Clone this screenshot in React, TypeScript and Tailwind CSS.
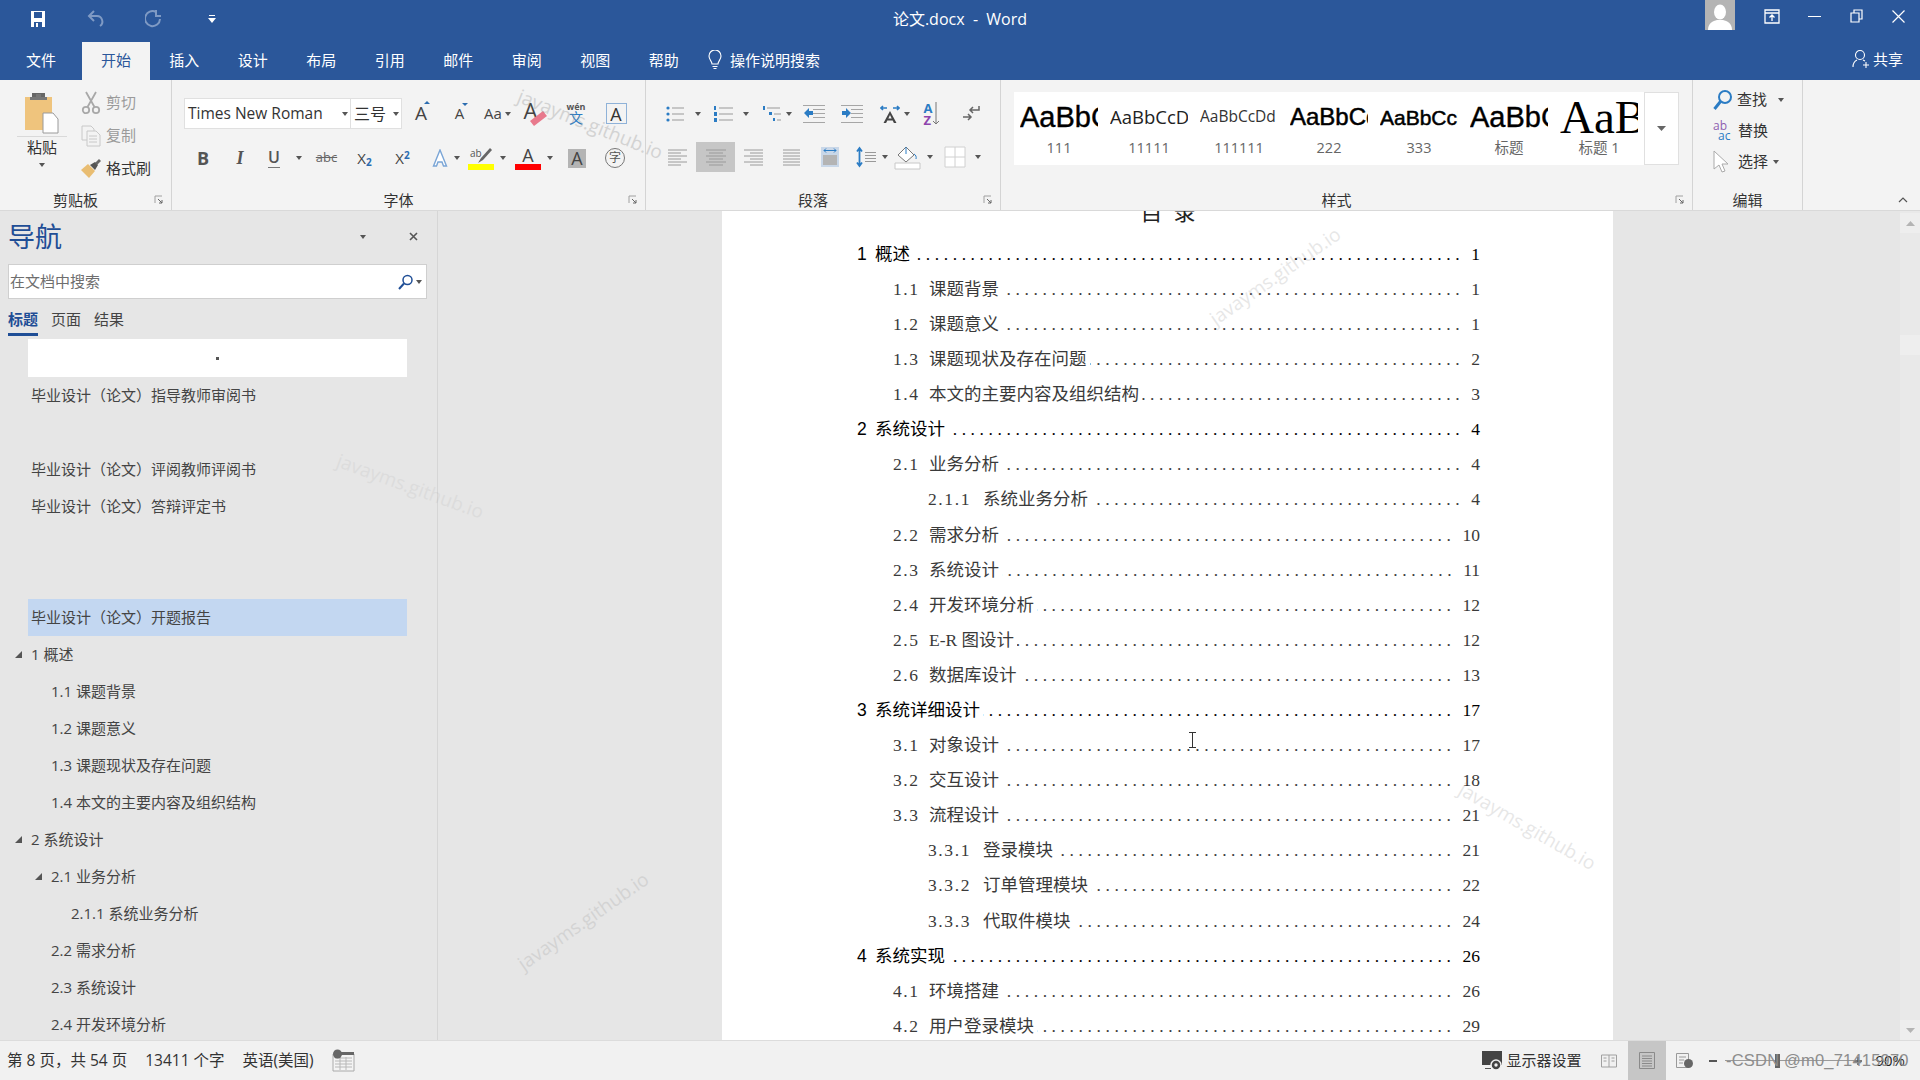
import React from 'react';

const tabs = ['插入', '设计', '布局', '引用', '邮件', '审阅', '视图', '帮助'];

const navRows: { text: string; level: number; open?: boolean; active?: boolean }[] = [
    { text: '毕业设计（论文）指导教师审阅书', level: 0 },
    { text: '', level: 0 },
    { text: '毕业设计（论文）评阅教师评阅书', level: 0 },
    { text: '毕业设计（论文）答辩评定书', level: 0 },
    { text: '', level: 0 },
    { text: '', level: 0 },
    { text: '毕业设计（论文）开题报告', level: 0, active: true },
    { text: '1 概述', level: 0, open: true },
    { text: '1.1 课题背景', level: 1 },
    { text: '1.2 课题意义', level: 1 },
    { text: '1.3 课题现状及存在问题', level: 1 },
    { text: '1.4 本文的主要内容及组织结构', level: 1 },
    { text: '2 系统设计', level: 0, open: true },
    { text: '2.1 业务分析', level: 1, open: true },
    { text: '2.1.1 系统业务分析', level: 2 },
    { text: '2.2 需求分析', level: 1 },
    { text: '2.3 系统设计', level: 1 },
    { text: '2.4 开发环境分析', level: 1 },
];

const toc: [number, string, string, string][] = [
    [1, '1', '概述', '1'],
    [2, '1.1', '课题背景', '1'],
    [2, '1.2', '课题意义', '1'],
    [2, '1.3', '课题现状及存在问题', '2'],
    [2, '1.4', '本文的主要内容及组织结构', '3'],
    [1, '2', '系统设计', '4'],
    [2, '2.1', '业务分析', '4'],
    [3, '2.1.1', '系统业务分析', '4'],
    [2, '2.2', '需求分析', '10'],
    [2, '2.3', '系统设计', '11'],
    [2, '2.4', '开发环境分析', '12'],
    [2, '2.5', 'E-R 图设计', '12'],
    [2, '2.6', '数据库设计', '13'],
    [1, '3', '系统详细设计', '17'],
    [2, '3.1', '对象设计', '17'],
    [2, '3.2', '交互设计', '18'],
    [2, '3.3', '流程设计', '21'],
    [3, '3.3.1', '登录模块', '21'],
    [3, '3.3.2', '订单管理模块', '22'],
    [3, '3.3.3', '代取件模块', '24'],
    [1, '4', '系统实现', '26'],
    [2, '4.1', '环境搭建', '26'],
    [2, '4.2', '用户登录模块', '29'],
];

const styles = [
    { preview: 'AaBbCcDd', name: '111', cls: "text-[29px] text-black [-webkit-text-stroke:0.4px_black] font-['Liberation_Sans',sans-serif]" },
    { preview: 'AaBbCcDd', name: '11111', cls: "text-[18.5px] text-[#222] font-['Open_Sans',sans-serif]" },
    { preview: 'AaBbCcDd', name: '111111', cls: "text-[15.5px] text-[#333] font-['Open_Sans',sans-serif]" },
    { preview: 'AaBbCcDd', name: '222', cls: "text-[24px] text-black [-webkit-text-stroke:0.5px_black] font-['Liberation_Sans',sans-serif]" },
    { preview: 'AaBbCcDd', name: '333', cls: "text-[21px] text-black [-webkit-text-stroke:0.5px_black] font-['Liberation_Sans',sans-serif]" },
    { preview: 'AaBbCcDd', name: '标题', cls: "text-[29px] text-black [-webkit-text-stroke:0.4px_black] font-['Liberation_Sans',sans-serif]" },
    { preview: 'AaBbCcDd', name: '标题 1', cls: "text-[47px] text-black font-['Liberation_Serif',serif]" },
];

function Caret({ color = '#555' }: { color?: string }) {
    return (
        <svg width="6" height="4" viewBox="0 0 6 4" className="shrink-0">
            <polygon points="0,0 6,0 3,4" fill={color} />
        </svg>
    );
}

function Cell({ w, children }: { w: string; children?: React.ReactNode }) {
    return <div className={`flex items-center justify-center shrink-0 ${w}`}>{children}</div>;
}

function Launcher() {
    return (
        <svg width="10" height="10" viewBox="0 0 10 10" className="absolute right-[7px] bottom-[5px]">
            <path d="M1 8V1h7" fill="none" stroke="#a0a0a0" />
            <path d="M4 4l4 4M8 5v3H5" fill="none" stroke="#666" />
        </svg>
    );
}

function Lines({ rows, w = 20, h = 20 }: { rows: [number, number, number][]; w?: number; h?: number }) {
    return (
        <svg width={w} height={h} viewBox={`0 0 ${w} ${h}`}>
            {rows.map(([a, b, y], i) => (
                <line key={i} x1={a} x2={b} y1={y} y2={y} stroke="#9a9a9a" strokeWidth="1" />
            ))}
        </svg>
    );
}

function Watermark({ cls }: { cls: string }) {
    return (
        <div className={`absolute pointer-events-none whitespace-nowrap text-[19px] font-['Open_Sans',sans-serif] text-[#8a8a8a] ${cls}`}>
            javayms.github.io
        </div>
    );
}

function TitleBar() {
    return (
        <div className="grid grid-cols-[1fr_auto_1fr] h-[42px] text-white">
            <div className="flex items-center h-[38px] pl-[9px]">
                <Cell w="w-[58px]">
                    <svg width="16" height="18" viewBox="0 0 16 18">
                        <path d="M1 1h14v16H1z" fill="#fff" />
                        <path d="M4 2h8v6H4zM4 12h8v5H4z" fill="#2b579a" />
                        <path d="M6 13h2v4H6z" fill="#fff" />
                    </svg>
                </Cell>
                <Cell w="w-[58px]">
                    <svg width="18" height="20" viewBox="0 0 18 20" fill="none" stroke="#7f9ac4" strokeWidth="2">
                        <path d="M7 2L2 7l5 5M2 7h8a5.5 5.5 0 0 1 3 10" />
                    </svg>
                </Cell>
                <Cell w="w-[58px]">
                    <svg width="18" height="20" viewBox="0 0 18 20" fill="none" stroke="#7f9ac4" strokeWidth="2">
                        <path d="M11 3a7.5 7.5 0 1 0 4 7M11 1v6h5" />
                    </svg>
                </Cell>
                <Cell w="w-[58px]">
                    <svg width="8" height="8" viewBox="0 0 8 8">
                        <path d="M1 0h6v1H1zM0 3h8L4 8z" fill="#fff" />
                    </svg>
                </Cell>
            </div>
            <div className="h-[38px] flex items-center text-[16px] leading-none">论文.docx&nbsp; - &nbsp;Word</div>
            <div className="flex items-start justify-end h-full pr-px">
                <div className="w-[30px] h-[30px] bg-[#b4b4b4] mr-[16px] overflow-hidden flex justify-center items-end">
                    <svg width="28" height="28" viewBox="0 0 28 28">
                        <ellipse cx="14" cy="10" rx="6" ry="7.5" fill="#fff" />
                        <path d="M2 28c0-7 5-9 9-10h6c4 1 9 3 9 10z" fill="#fff" />
                    </svg>
                </div>
                <Cell w="w-[42px] h-[32px]">
                    <svg width="16" height="15" viewBox="0 0 16 15" fill="none" stroke="#fff" strokeWidth="1.3">
                        <path d="M1 1h14v13H1zM1 4h14M8 12V6M5.5 8.5L8 6l2.5 2.5" />
                    </svg>
                </Cell>
                <Cell w="w-[42px] h-[32px]">
                    <div className="w-[13px] h-px bg-white" />
                </Cell>
                <Cell w="w-[42px] h-[32px]">
                    <svg width="13" height="14" viewBox="0 0 13 14" fill="none" stroke="#fff" strokeWidth="1.2">
                        <path d="M1 4h8v9H1zM4 4V1h8v9H9" />
                    </svg>
                </Cell>
                <Cell w="w-[42px] h-[32px]">
                    <svg width="13" height="13" viewBox="0 0 13 13" stroke="#fff" strokeWidth="1.2">
                        <path d="M0.5 0.5l12 12M12.5 0.5l-12 12" />
                    </svg>
                </Cell>
            </div>
        </div>
    );
}

function TabBar() {
    return (
        <div className="flex h-[38px] text-white text-[15px] leading-none items-stretch">
            <div className="w-[82px] flex items-center justify-center pb-[2px]">文件</div>
            <div className="w-[68px] flex items-center justify-center pb-[2px] bg-[#f3f3f3] text-[#2b579a]">开始</div>
            {tabs.map((t) => (
                <div key={t} className="w-[68.5px] flex items-center justify-center pb-[2px]">
                    {t}
                </div>
            ))}
            <div className="flex items-center ml-[10px] gap-[8px] pb-[2px]">
                <svg width="14" height="20" viewBox="0 0 14 20" fill="none" stroke="#fff" strokeWidth="1.1">
                    <path d="M4 14c0-3-3-4-3-8a6 6 0 0 1 12 0c0 4-3 5-3 8zM4.5 16.5h5M5.5 18.5h3" />
                </svg>
                操作说明搜索
            </div>
            <div className="ml-auto flex items-center gap-[3px] pr-[17px] pb-[4px]">
                <svg width="18" height="20" viewBox="0 0 18 20" fill="none" stroke="#fff" strokeWidth="1.1">
                    <circle cx="8" cy="6" r="4.5" />
                    <path d="M1 18c0-4 2-6 4-7M11 11l2 1M14 13v6M11 16h6" />
                </svg>
                共享
            </div>
        </div>
    );
}

function GroupLabel({ text, launcher = true }: { text: string; launcher?: boolean }) {
    return (
        <>
            <div className={`absolute bottom-0 left-0 right-0 h-[20px] flex items-center justify-center text-[15px] leading-none text-[#333] ${launcher ? 'pr-[20px]' : ''}`}>
                {text}
            </div>
            {launcher && <Launcher />}
        </>
    );
}

function ClipboardGroup() {
    return (
        <div className="relative w-[172px] shrink-0 border-r border-[#d4d4d4] flex">
            <div className="w-[78px] ml-[3px] flex flex-col items-center shrink-0">
                <svg width="36" height="42" viewBox="0 0 36 42" className="mt-[12px]">
                    <path d="M1 5h27v33H1z" fill="#efc47d" />
                    <path d="M8 5h13V1h-13z" fill="#666" />
                    <path d="M12 2h5v3h-5zM6 5h17v3H6z" fill="#777" />
                    <path d="M19 21h10l5 6v14H19z" fill="#fff" stroke="#9a9a9a" />
                </svg>
                <div className="w-[50px] h-px bg-[#d9d9d9] mt-[2px]" />
                <div className="text-[15px] leading-none text-[#333] mt-[3px]">粘贴</div>
                <div className="mt-[8px]">
                    <Caret />
                </div>
            </div>
            <div className="flex flex-col pt-[6px] text-[15px] leading-none">
                <div className="flex items-center gap-[5px] h-[33px] text-[#9b9b9b]">
                    <svg width="20" height="24" viewBox="0 0 20 24" fill="none" stroke="#a8a8a8" strokeWidth="1.8">
                        <circle cx="5" cy="19" r="3.2" />
                        <circle cx="15" cy="19" r="3.2" />
                        <path d="M6.5 16L15 1M13.5 16L5 1" />
                    </svg>
                    剪切
                </div>
                <div className="flex items-center gap-[5px] h-[33px] text-[#9b9b9b]">
                    <svg width="20" height="22" viewBox="0 0 20 22" fill="#f3f3f3" stroke="#c8c8c8">
                        <path d="M1 1h9l3 3v11H1z" />
                        <path d="M6 6h9l4 4v11H6zM8 11h8M8 14h8M8 17h8" />
                    </svg>
                    复制
                </div>
                <div className="flex items-center gap-[5px] h-[33px] text-[#333]">
                    <svg width="20" height="20" viewBox="0 0 20 20">
                        <path d="M0 11l7-6 7 7-6 7z" fill="#e9bd72" />
                        <path d="M9 6l5-3 3 3-3 5z" fill="#555" />
                        <path d="M14 4l4-4 2 2-4 4z" fill="#666" />
                    </svg>
                    格式刷
                </div>
            </div>
            <GroupLabel text="剪贴板" />
        </div>
    );
}

function FontGroup() {
    return (
        <div className="relative w-[474px] shrink-0 border-r border-[#d4d4d4] pl-[12px] pt-[18px] text-[#444]">
            <div className="flex items-center h-[31px]">
                <div className="w-[167px] h-full bg-white border border-[#e0e0e0] flex items-center justify-between pl-[3px] pr-[2px] text-[15.5px] text-[#333] font-['Open_Sans',sans-serif]">
                    Times New Roman
                    <Caret />
                </div>
                <div className="w-[51px] h-full bg-white border border-l-0 border-[#e0e0e0] flex items-center justify-between pl-[3px] pr-[2px] text-[16px] text-[#333]">
                    三号
                    <Caret />
                </div>
                <Cell w="w-[38px]">
                    <span className="relative text-[19px] leading-none font-['Open_Sans',sans-serif]">
                        A
                        <span className="absolute -top-[3px] -right-[3px] w-0 h-0 border-x-[3px] border-x-transparent border-b-[3px] border-b-[#2b6cb0]" />
                    </span>
                </Cell>
                <Cell w="w-[39px]">
                    <span className="relative text-[15px] leading-none font-['Open_Sans',sans-serif]">
                        A
                        <span className="absolute -top-[3px] -right-[4px] w-0 h-0 border-x-[3px] border-x-transparent border-t-[3px] border-t-[#2b6cb0]" />
                    </span>
                </Cell>
                <Cell w="w-[37px]">
                    <span className="text-[15px] leading-none font-['Open_Sans',sans-serif] mr-[3px]">Aa</span>
                    <Caret />
                </Cell>
                <Cell w="w-[39px]">
                    <span className="relative text-[22px] leading-none font-['Open_Sans',sans-serif] pr-[10px] pb-[8px]">
                        A
                        <svg width="22" height="20" viewBox="0 0 22 20" className="absolute left-[3px] top-[9px]">
                            <path d="M3 13L16 3l4 5-13 10z" fill="#e8798c" />
                        </svg>
                    </span>
                </Cell>
                <Cell w="w-[42px]">
                    <div className="flex flex-col items-center leading-none font-['Open_Sans','Noto_Sans_CJK_SC',sans-serif]">
                        <span className="text-[9px] font-bold text-[#555]">wén</span>
                        <span className="text-[14px] text-[#2b7cc4]">文</span>
                    </div>
                </Cell>
                <Cell w="w-[38px]">
                    <div className="w-[21px] h-[21px] border border-[#8fb2d8] flex items-center justify-center text-[18px] leading-none font-['Open_Sans',sans-serif] text-[#333]">
                        A
                    </div>
                </Cell>
            </div>
            <div className="flex items-center h-[30px] mt-[14px]">
                <Cell w="w-[38px]">
                    <span className="text-[18px] font-bold font-['Open_Sans',sans-serif] text-[#555]">B</span>
                </Cell>
                <Cell w="w-[36px]">
                    <span className="text-[18px] italic font-bold font-['Liberation_Serif',serif] text-[#555]">I</span>
                </Cell>
                <Cell w="w-[32px]">
                    <span className="text-[16px] font-semibold font-['Open_Sans',sans-serif] text-[#555] border-b border-[#777] leading-[19px]">U</span>
                </Cell>
                <Cell w="w-[18px]">
                    <Caret />
                </Cell>
                <Cell w="w-[37px]">
                    <span className="text-[13px] line-through font-['Open_Sans',sans-serif] text-[#666]">abc</span>
                </Cell>
                <Cell w="w-[39px]">
                    <span className="text-[15px] font-['Open_Sans',sans-serif]">
                        X<sub className="text-[10px] text-[#2b6cb0] font-bold">2</sub>
                    </span>
                </Cell>
                <Cell w="w-[37px]">
                    <span className="text-[15px] font-['Open_Sans',sans-serif]">
                        X<sup className="text-[10px] text-[#2b6cb0] font-bold">2</sup>
                    </span>
                </Cell>
                <div className="w-[5px]" />
                <Cell w="w-[28px]">
                    <svg width="16" height="18" viewBox="0 0 16 18" fill="#fff" stroke="#7aa5d6" strokeWidth="1.4">
                        <path d="M8 1l6.5 16h-3l-1.5-4H6l-1.5 4h-3z" />
                    </svg>
                </Cell>
                <Cell w="w-[6px]">
                    <Caret />
                </Cell>
                <div className="w-[8px]" />
                <div className="w-[26px] flex flex-col items-center shrink-0">
                    <svg width="24" height="18" viewBox="0 0 24 18">
                        <text x="1" y="11" fontSize="10" fill="#555" fontFamily="Open Sans">ab</text>
                        <path d="M9 17l3-5 9-10 2 2-9 10z" fill="#666" />
                    </svg>
                    <div className="w-[26px] h-[6px] bg-[#ffff00]" />
                </div>
                <Cell w="w-[18px]">
                    <Caret />
                </Cell>
                <div className="w-[3px]" />
                <div className="w-[26px] flex flex-col items-center shrink-0">
                    <span className="text-[18px] leading-[18px] font-['Open_Sans',sans-serif]">A</span>
                    <div className="w-[26px] h-[6px] bg-[#ff0000]" />
                </div>
                <Cell w="w-[18px]">
                    <Caret />
                </Cell>
                <Cell w="w-[36px]">
                    <div className="w-[18px] h-[19px] bg-[#b4b4b4] flex items-center justify-center text-[18px] leading-none font-['Open_Sans',sans-serif]">
                        A
                    </div>
                </Cell>
                <Cell w="w-[40px]">
                    <div className="w-[20px] h-[20px] rounded-full border border-[#777] flex items-center justify-center text-[12px] leading-none text-[#555]">
                        字
                    </div>
                </Cell>
            </div>
            <GroupLabel text="字体" />
        </div>
    );
}

function ParagraphGroup() {
    const blue = '#2b7cc4';
    return (
        <div className="relative w-[355px] shrink-0 border-r border-[#d4d4d4] pl-[14px] pt-[18px]">
            <div className="flex items-center h-[31px]">
                <Cell w="w-[30px]">
                    <svg width="18" height="18" viewBox="0 0 18 18" fill={blue}>
                        <circle cx="2" cy="3" r="1.6" />
                        <circle cx="2" cy="9" r="1.6" />
                        <circle cx="2" cy="15" r="1.6" />
                        <path d="M6 2.5h12v1H6zM6 8.5h12v1H6zM6 14.5h12v1H6z" fill="#999" />
                    </svg>
                </Cell>
                <Cell w="w-[16px]"><Caret /></Cell>
                <Cell w="w-[34px]">
                    <svg width="20" height="18" viewBox="0 0 20 18" fill={blue}>
                        <path d="M1 1h2v4H1zM1 7h3v4H1zM1 13h3v4H1z" />
                        <path d="M6 2.5h14v1H6zM6 8.5h14v1H6zM6 14.5h14v1H6z" fill="#999" />
                    </svg>
                </Cell>
                <Cell w="w-[12px]"><Caret /></Cell>
                <div className="w-[8px]" />
                <Cell w="w-[24px]">
                    <svg width="20" height="18" viewBox="0 0 20 18" fill={blue}>
                        <path d="M1 1h2v4H1zM7 7h3v3H7zM11 13h2v3h-2z" />
                        <path d="M5 2.5h13v1H5zM12 8.5h7v1h-7zM15 14.5h4v1h-4z" fill="#999" />
                    </svg>
                </Cell>
                <Cell w="w-[10px]"><Caret /></Cell>
                <Cell w="w-[40px]">
                    <svg width="22" height="20" viewBox="0 0 22 20">
                        <path d="M0 1h22v1H0zM10 5h12v1H10zM10 9h12v1H10zM10 13h12v1H10zM0 18h22v1H0z" fill="#a6a6a6" />
                        <path d="M1 9l5-5v3h4v4H6v3z" fill={blue} />
                    </svg>
                </Cell>
                <Cell w="w-[36px]">
                    <svg width="22" height="20" viewBox="0 0 22 20">
                        <path d="M0 1h22v1H0zM10 5h12v1H10zM10 9h12v1H10zM10 13h12v1H10zM0 18h22v1H0z" fill="#a6a6a6" />
                        <path d="M10 9l-5-5v3H1v4h4v3z" fill={blue} />
                    </svg>
                </Cell>
                <div className="w-[8px]" />
                <Cell w="w-[24px]">
                    <svg width="20" height="20" viewBox="0 0 20 20">
                        <path d="M1 4h6M13 4h6M3 2L1 4l2 2M17 2l2 2-2 2" fill="none" stroke={blue} strokeWidth="1.6" />
                        <path d="M10 7l6.5 12h-2.6l-1.2-2.5H7.3L6.1 19H3.5zM8.3 14.5h3.4L10 11z" fill="#444" fillRule="evenodd" />
                    </svg>
                </Cell>
                <Cell w="w-[10px]"><Caret /></Cell>
                <Cell w="w-[40px]">
                    <div className="flex items-center">
                        <div className="flex flex-col text-[13px] leading-[12px] font-bold font-['Open_Sans',sans-serif]">
                            <span className="text-[#2b7cc4]">A</span>
                            <span className="text-[#8e44ad]">Z</span>
                        </div>
                        <svg width="8" height="24" viewBox="0 0 8 24" fill="none" stroke="#777">
                            <path d="M4 0v22M1 19l3 3 3-3" />
                        </svg>
                    </div>
                </Cell>
                <Cell w="w-[38px]">
                    <svg width="18" height="16" viewBox="0 0 18 16" fill="none" stroke="#666" strokeWidth="1.5">
                        <path d="M17 0v4H9M11 1L8 4l3 3M1 11h7M6 8l3 3-3 3" />
                    </svg>
                </Cell>
            </div>
            <div className="flex items-center h-[30px] mt-[13px]">
                <Cell w="w-[36px]"><Lines rows={[[0, 19, 3], [0, 13, 6], [0, 19, 9], [0, 13, 12], [0, 19, 15], [0, 13, 18]]} /></Cell>
                <div className="flex items-center justify-center shrink-0 w-[39px] h-[30px] bg-[#c6c6c6]">
                    <Lines rows={[[0, 20, 3], [3, 17, 6], [0, 20, 9], [3, 17, 12], [0, 20, 15], [3, 17, 18]]} />
                </div>
                <Cell w="w-[37px]"><Lines rows={[[0, 19, 3], [6, 19, 6], [0, 19, 9], [6, 19, 12], [0, 19, 15], [6, 19, 18]]} /></Cell>
                <Cell w="w-[39px]"><Lines w={17} rows={[[0, 17, 3], [0, 17, 6], [0, 17, 9], [0, 17, 12], [0, 17, 15], [0, 17, 18]]} /></Cell>
                <Cell w="w-[37px]">
                    <svg width="20" height="22" viewBox="0 0 20 22">
                        <path d="M1 1h18v20H1z" fill="#c9d7e8" />
                        <path d="M3 9h14v10H3z" fill="#b4b4b4" />
                        <path d="M4 4.5h12M6 2.5L4 4.5l2 2M14 2.5l2 2-2 2" fill="none" stroke="#2b7cc4" />
                    </svg>
                </Cell>
                <div className="w-[3px]" />
                <Cell w="w-[29px]">
                    <svg width="20" height="22" viewBox="0 0 20 22">
                        <path d="M3.5 3v16M1 5.5L3.5 2 6 5.5M1 16.5L3.5 20 6 16.5" fill="none" stroke="#2b7cc4" strokeWidth="1.8" />
                        <path d="M9 6h11v1H9zM9 9h11v1H9zM9 12h11v1H9zM9 15h11v1H9z" fill="#999" />
                    </svg>
                </Cell>
                <Cell w="w-[9px]"><Caret /></Cell>
                <Cell w="w-[36px]">
                    <svg width="27" height="25" viewBox="0 0 27 25">
                        <path d="M4 10l8-8 8 8-8 7z" fill="#fff" stroke="#777" />
                        <path d="M12 2v7M20 9c2 1 2.5 3 2 5" fill="none" stroke="#2b7cc4" />
                        <path d="M1 18h25v6H1z" fill="#fff" stroke="#c8c8c8" />
                    </svg>
                </Cell>
                <Cell w="w-[10px]"><Caret /></Cell>
                <div className="w-[5px]" />
                <Cell w="w-[30px]">
                    <svg width="22" height="22" viewBox="0 0 22 22" fill="#fff" stroke="#d0d0d0">
                        <path d="M1 1h20v20H1zM11 1v20M1 11h20" />
                    </svg>
                </Cell>
                <Cell w="w-[15px]"><Caret /></Cell>
            </div>
            <GroupLabel text="段落" />
        </div>
    );
}

function StylesGroup() {
    return (
        <div className="relative w-[692px] shrink-0 border-r border-[#d4d4d4] pl-[13px] pt-[12px]">
            <div className="flex w-[665px] h-[73px] bg-white">
                {styles.map((s) => (
                    <div key={s.name} className="w-[90px] shrink-0 flex flex-col items-center">
                        <div className="w-[78px] h-[50px] overflow-hidden flex items-center">
                            <span className={`whitespace-nowrap leading-none ${s.cls}`}>{s.preview}</span>
                        </div>
                        <div className="text-[14.5px] leading-none text-[#666] mt-[-1px] font-['Open_Sans','Noto_Sans_CJK_SC',sans-serif]">{s.name}</div>
                    </div>
                ))}
                <div className="flex-1 border border-[#e0e0e0] flex items-center justify-center">
                    <svg width="9" height="5" viewBox="0 0 9 5">
                        <polygon points="0,0 9,0 4.5,5" fill="#666" />
                    </svg>
                </div>
            </div>
            <GroupLabel text="样式" />
        </div>
    );
}

function EditGroup() {
    return (
        <div className="relative w-[110px] shrink-0 border-r border-[#d4d4d4] pl-[20px] pt-[4px] text-[15px] leading-none text-[#333]">
            <div className="flex items-center h-[31px]">
                <svg width="20" height="22" viewBox="0 0 20 22" fill="none" stroke="#2b7cc4" strokeWidth="2" className="mr-[4px]">
                    <circle cx="12" cy="8" r="6" />
                    <path d="M7.5 12.5L1.5 20" strokeWidth="3" />
                </svg>
                查找
                <span className="ml-[11px]"><Caret /></span>
            </div>
            <div className="flex items-center h-[31px]">
                <div className="flex flex-col w-[22px] mr-[3px] text-[12px] leading-[10px] font-['Open_Sans',sans-serif]">
                    <span className="text-[#8e5fb0]">ab</span>
                    <span className="text-[#2b7cc4] pl-[5px]">ac</span>
                </div>
                替换
            </div>
            <div className="flex items-center h-[31px]">
                <svg width="16" height="24" viewBox="0 0 16 24" fill="#fff" stroke="#aaa" className="mr-[9px]">
                    <path d="M1 1v18l5-4 3 7 3-1-3-7h6z" />
                </svg>
                选择
                <span className="ml-[5px]"><Caret /></span>
            </div>
            <GroupLabel text="编辑" launcher={false} />
        </div>
    );
}

function Ribbon() {
    return (
        <div className="relative flex h-[131px] bg-[#f3f3f3] border-b border-[#d9d9d9]">
            <ClipboardGroup />
            <FontGroup />
            <ParagraphGroup />
            <StylesGroup />
            <EditGroup />
            <svg width="10" height="6" viewBox="0 0 10 6" fill="none" stroke="#555" strokeWidth="1.2" className="absolute right-[12px] bottom-[7px]">
                <path d="M1 5l4-4 4 4" />
            </svg>
        </div>
    );
}

function NavPanel() {
    return (
        <div className="w-[438px] shrink-0 border-r border-[#d6d6d6] bg-[#e6e6e6] overflow-hidden">
            <div className="h-[53px] flex items-center pl-[8px] pb-[2px]">
                <span className="text-[27px] leading-none text-[#1f4e96]">导航</span>
                <span className="ml-[298px]"><Caret /></span>
                <svg width="9" height="9" viewBox="0 0 9 9" stroke="#555" strokeWidth="1.6" className="ml-[43px]">
                    <path d="M1 1l7 7M8 1l-7 7" />
                </svg>
            </div>
            <div className="mx-[8px] w-[419px] h-[35px] bg-white border border-[#cfcfcf] flex items-center pl-[1px] pr-[4px] text-[15px] text-[#6e6e6e]">
                在文档中搜索
                <svg width="15" height="16" viewBox="0 0 15 16" fill="none" stroke="#1f4e96" strokeWidth="1.5" className="ml-auto mr-[3px]">
                    <circle cx="9.5" cy="6" r="4.5" />
                    <path d="M6 9.5L1 15" strokeWidth="2" />
                </svg>
                <Caret />
            </div>
            <div className="flex gap-[13px] pl-[8px] h-[37px] text-[15px] leading-none text-[#444] pt-[13px]">
                <span className="h-[24px] border-b-[3px] border-[#1f4e96] font-bold text-[#1f4e96]">标题</span>
                <span>页面</span>
                <span>结果</span>
            </div>
            <div className="ml-[28px] mt-[3px] w-[379px] h-[38px] bg-white flex items-center justify-center">
                <div className="w-[3px] h-[3px] bg-[#555]" />
            </div>
            {navRows.map((r, i) => (
                <div key={i} className="relative h-[37px] flex items-center text-[15px] leading-none text-[#444] pb-[1px]">
                    {r.active && <div className="absolute left-[28px] w-[379px] top-0 bottom-0 bg-[#c3d7f1]" />}
                    {r.open && (
                        <svg width="7" height="7" viewBox="0 0 7 7" className={`absolute ${r.level === 0 ? 'left-[15px]' : 'left-[35px]'}`}>
                            <polygon points="7,0 7,7 0,7" fill="#555" />
                        </svg>
                    )}
                    {r.text && (
                        <span className={`relative ${r.level === 0 ? 'ml-[31px]' : r.level === 1 ? 'ml-[51px]' : 'ml-[71px]'}`}>{r.text}</span>
                    )}
                </div>
            ))}
        </div>
    );
}

function TocRow({ level, num, title, page }: { level: number; num: string; title: string; page: string }) {
    const indent = level === 1 ? 'ml-0' : level === 2 ? 'ml-[36px]' : 'ml-[71px]';
    const numW = level === 1 ? 'w-[18px]' : level === 2 ? 'w-[36px]' : 'w-[55px]';
    const tone = level === 1 ? 'text-black' : 'text-[#3a3a3a]';
    const numFont = level === 1 ? "font-['Liberation_Sans',sans-serif]" : 'tracking-[1.6px]';
    return (
        <div className={`flex items-center h-[35.1px] text-[17.5px] leading-none whitespace-nowrap ${tone}`}>
            <span className={`${indent} ${numW} shrink-0 ${numFont}`}>{num}</span>
            <span className="shrink-0">{title}</span>
            <span className="flex-1 min-w-0 flex justify-end overflow-hidden tracking-[4.6px] ml-[3px] mr-[7px]">
                {'.'.repeat(100)}
            </span>
            <span className="shrink-0 text-right">{page}</span>
        </div>
    );
}

function Document() {
    return (
        <div className="flex-1 min-w-0 flex bg-[#e6e6e6] overflow-hidden">
            <div className="w-[284px] shrink-0" />
            <div className="w-[891px] shrink-0 bg-white pl-[135px] pr-[133px] font-['Liberation_Serif','Noto_Sans_CJK_SC',serif] overflow-hidden">
                <div className="text-[22px] leading-none text-center text-[#222] -mt-[9px] h-[35px] pr-[1px] whitespace-pre">目  录</div>
                {toc.map(([level, num, title, page]) => (
                    <TocRow key={num} level={level} num={num} title={title} page={page} />
                ))}
            </div>
            <div className="flex-1 flex justify-end">
                <div className="w-[20px] flex flex-col bg-[#e9e9e9]">
                    <div className="h-[20px] mt-[2px] bg-[#eeeeee] flex items-center justify-center">
                        <svg width="9" height="5" viewBox="0 0 9 5"><polygon points="0,5 9,5 4.5,0" fill="#b4b4b4" /></svg>
                    </div>
                    <div className="h-[20px] mt-[102px] bg-[#eeeeee]" />
                    <div className="mt-auto h-[20px] bg-[#eeeeee] flex items-center justify-center">
                        <svg width="9" height="5" viewBox="0 0 9 5"><polygon points="0,0 9,0 4.5,5" fill="#b4b4b4" /></svg>
                    </div>
                </div>
            </div>
        </div>
    );
}

function StatusBar() {
    return (
        <div className="relative h-[40px] shrink-0 bg-[#f1f1f1] border-t border-[#dcdcdc] flex items-center text-[15.5px] leading-none text-[#333] pl-[7px]">
            <span>第 8 页，共 54 页</span>
            <span className="ml-[18px]">13411 个字</span>
            <span className="ml-[18px]">英语(美国)</span>
            <svg width="23" height="23" viewBox="0 0 23 23" className="ml-[18px]">
                <path d="M1 5h21v17H1z" fill="#f4f4f4" stroke="#aaa" />
                <path d="M3 9h17M3 12h17M3 15h17M3 18h17M8 8v13M14 8v13" stroke="#b8b8b8" />
                <path d="M8 3h14v3H8z" fill="#666" />
                <circle cx="5.5" cy="5" r="4.5" fill="#666" />
            </svg>
            <div className="ml-auto flex items-center h-full pr-[15px]">
                <svg width="22" height="22" viewBox="0 0 22 22">
                    <path d="M0 1h20v14H0z" fill="#444" />
                    <circle cx="14" cy="15" r="5" fill="#444" stroke="#f1f1f1" strokeWidth="1.5" />
                    <circle cx="14" cy="15" r="1.7" fill="#f1f1f1" />
                    <path d="M3 18h6v1H3z" fill="#555" />
                </svg>
                <span className="ml-[2px] text-[15px]">显示器设置</span>
                <svg width="16" height="14" viewBox="0 0 16 14" fill="none" stroke="#a0a0a0" className="ml-[20px]">
                    <path d="M0.5 1h15v12H0.5zM8 1v12M2.5 4h3M2.5 7h3M10.5 4h3M10.5 7h3" />
                </svg>
                <div className="ml-[11px] w-[38px] h-full bg-[#c6c6c6] flex items-center justify-center">
                    <svg width="16" height="17" viewBox="0 0 16 17" fill="none" stroke="#8a8a8a">
                        <path d="M0.5 0.5h15v16H0.5zM3 4h10M3 6.5h10M3 9h10M3 11.5h10M3 14h10" />
                    </svg>
                </div>
                <svg width="18" height="16" viewBox="0 0 18 16" className="ml-[10px]">
                    <path d="M0.5 0.5h12v14H0.5zM3 4h7M3 7h5M3 10h4" fill="none" stroke="#999" />
                    <circle cx="12.5" cy="10.5" r="4.5" fill="#666" />
                </svg>
                <div className="ml-[15px] w-[8px] h-[2px] bg-[#555]" />
                <div className="relative w-[130px] h-[14px] ml-[8px] flex items-center">
                    <div className="w-full h-px bg-[#9a9a9a]" />
                    <div className="absolute left-[50px] top-0 w-[5px] h-[14px] bg-[#666]" />
                </div>
                <svg width="8" height="8" viewBox="0 0 8 8" stroke="#555" strokeWidth="1.5" className="ml-[-1px]">
                    <path d="M4 0v8M0 4h8" />
                </svg>
                <span className="ml-[13px] text-[15px] text-[#222]">90%</span>
            </div>
            <div className="absolute left-[1726px] top-[11px] whitespace-nowrap text-[16.5px] leading-none tracking-[0.2px] text-[#8d8d8d] font-['Liberation_Sans',sans-serif] pointer-events-none">
                -CSDN @m0_71415970
            </div>
        </div>
    );
}

export default function App() {
    return (
        <div className="relative w-[1920px] h-[1080px] flex flex-col overflow-hidden font-['Open_Sans','Noto_Sans_CJK_SC',sans-serif]">
            <div className="bg-[#2b579a] h-[80px] shrink-0">
                <TitleBar />
                <TabBar />
            </div>
            <Ribbon />
            <div className="flex-1 min-h-0 flex">
                <NavPanel />
                <Document />
            </div>
            <StatusBar />

            <Watermark cls="left-[513px] top-[110px] rotate-[22deg] opacity-30" />
            <Watermark cls="left-[1198px] top-[262px] -rotate-[35deg] opacity-20" />
            <Watermark cls="left-[1450px] top-[812px] rotate-[30deg] opacity-20" />
            <Watermark cls="left-[506px] top-[907px] -rotate-[35deg] opacity-20" />
            <Watermark cls="left-[333px] top-[472px] rotate-[20deg] opacity-10" />
            <svg width="9" height="16" viewBox="0 0 9 16" fill="none" stroke="#333" className="absolute left-[1188px] top-[732px]">
                <path d="M1 0.5h7M1 15.5h7M4.5 0.5v15" />
            </svg>
        </div>
    );
}
